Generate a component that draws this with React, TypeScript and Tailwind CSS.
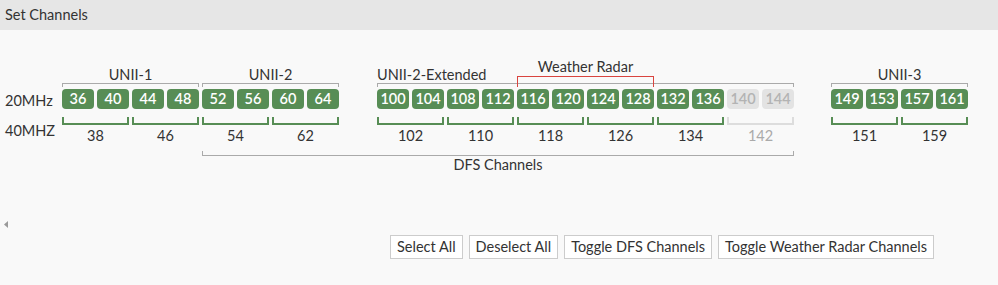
import React from "react";

type Group = {
  name: string;
  ch: number[];
  bonded: number[];
  left?: boolean;
};

const DISABLED = new Set([140, 144, 142]);

const groups: Record<string, Group> = {
  u1: { name: "UNII-1", ch: [36, 40, 44, 48], bonded: [38, 46] },
  u2: { name: "UNII-2", ch: [52, 56, 60, 64], bonded: [54, 62] },
  u2e: {
    name: "UNII-2-Extended",
    ch: [100, 104, 108, 112, 116, 120, 124, 128, 132, 136, 140, 144],
    bonded: [102, 110, 118, 126, 134, 142],
    left: true,
  },
  u3: { name: "UNII-3", ch: [149, 153, 157, 161], bonded: [151, 159] },
};

function ChannelGroup({ g, children }: { g: Group; children?: React.ReactNode }) {
  return (
    <div className="relative flex flex-col">
      {children}
      <div
        className={
          "h-[16px] text-[14.5px] leading-[16px] text-[#333] whitespace-nowrap " +
          (g.left ? "text-left" : "text-center")
        }
      >
        {g.name}
      </div>
      <div className="h-[4px] w-full border-t border-l border-r border-[#aaaaaa]" />
      <div className="mt-[2px] flex gap-[3px]">
        {g.ch.map((c) => (
          <div
            key={c}
            className={
              "flex h-[20px] w-[32px] items-center justify-center rounded-[4px] text-[14.5px] font-semibold leading-none " +
              (DISABLED.has(c) ? "bg-[#e3e3e3] text-[#b3b3b3]" : "bg-[#578d55] text-white")
            }
          >
            {c}
          </div>
        ))}
      </div>
      <div className="mt-[8px] flex gap-[3px]">
        {g.bonded.map((b) => (
          <div key={b} className="flex w-[67px] flex-col">
            <div
              className={
                "h-[8px] w-full border-b-2 border-l-2 border-r-2 " +
                (DISABLED.has(b) ? "border-[#dddddd]" : "border-[#578d55]")
              }
            />
            <div
              className={
                "mt-[3px] h-[16px] text-center text-[14.5px] leading-[16px] " +
                (DISABLED.has(b) ? "text-[#aaaaaa]" : "text-[#333]")
              }
            >
              {b}
            </div>
          </div>
        ))}
      </div>
    </div>
  );
}

export default function App() {
  return (
    <div className="h-[285px] w-[998px] overflow-hidden bg-[#f9f9f9] font-[Lato,sans-serif] text-[#333]">
      <div className="flex h-[30px] items-center bg-[#e6e6e6] pl-[5px] text-[14.5px]">Set Channels</div>

      <div className="mt-[37px] flex items-start">
        <div className="flex w-[62px] flex-col pl-[5px] text-[14.5px] leading-[16px]">
          <div className="mt-[26px] h-[16px]">20MHz</div>
          <div className="mt-[14px] h-[16px]">40MHZ</div>
        </div>

        <ChannelGroup g={groups.u1} />

        <div className="ml-[3px] flex flex-col">
          <div className="flex items-start">
            <ChannelGroup g={groups.u2} />
            <div className="ml-[38px]">
              <ChannelGroup g={groups.u2e}>
                <div className="absolute left-[140px] top-[-8px] flex w-[137px] flex-col">
                  <div className="h-[17px] text-center text-[14.5px] leading-[16px] text-[#333] whitespace-nowrap">
                    Weather Radar
                  </div>
                  <div className="h-[11px] w-full border-t border-l border-r border-[#d9443f]" />
                </div>
              </ChannelGroup>
            </div>
          </div>
          <div className="mt-[7px] h-[5px] w-full border-b border-l border-r border-[#aaaaaa]" />
          <div className="mt-[1px] h-[16px] text-center text-[14.5px] leading-[16px]">DFS Channels</div>
        </div>

        <div className="ml-[37px]">
          <ChannelGroup g={groups.u3} />
        </div>
      </div>

      <div className="mt-[48px] h-[7px] pl-[4px]">
        <svg width="5" height="7" viewBox="0 0 5 7" className="block">
          <polygon points="4,0 4,7 0,3.5" fill="#9a9a9a" />
        </svg>
      </div>

      <div className="mt-[7px] flex justify-end gap-[6px] pr-[64px]">
        {["Select All", "Deselect All", "Toggle DFS Channels", "Toggle Weather Radar Channels"].map((t) => (
          <button
            key={t}
            className="flex h-[24px] items-center border border-[#cccccc] bg-white px-[6px] text-[14.5px] leading-none text-[#333]"
          >
            {t}
          </button>
        ))}
      </div>
    </div>
  );
}
